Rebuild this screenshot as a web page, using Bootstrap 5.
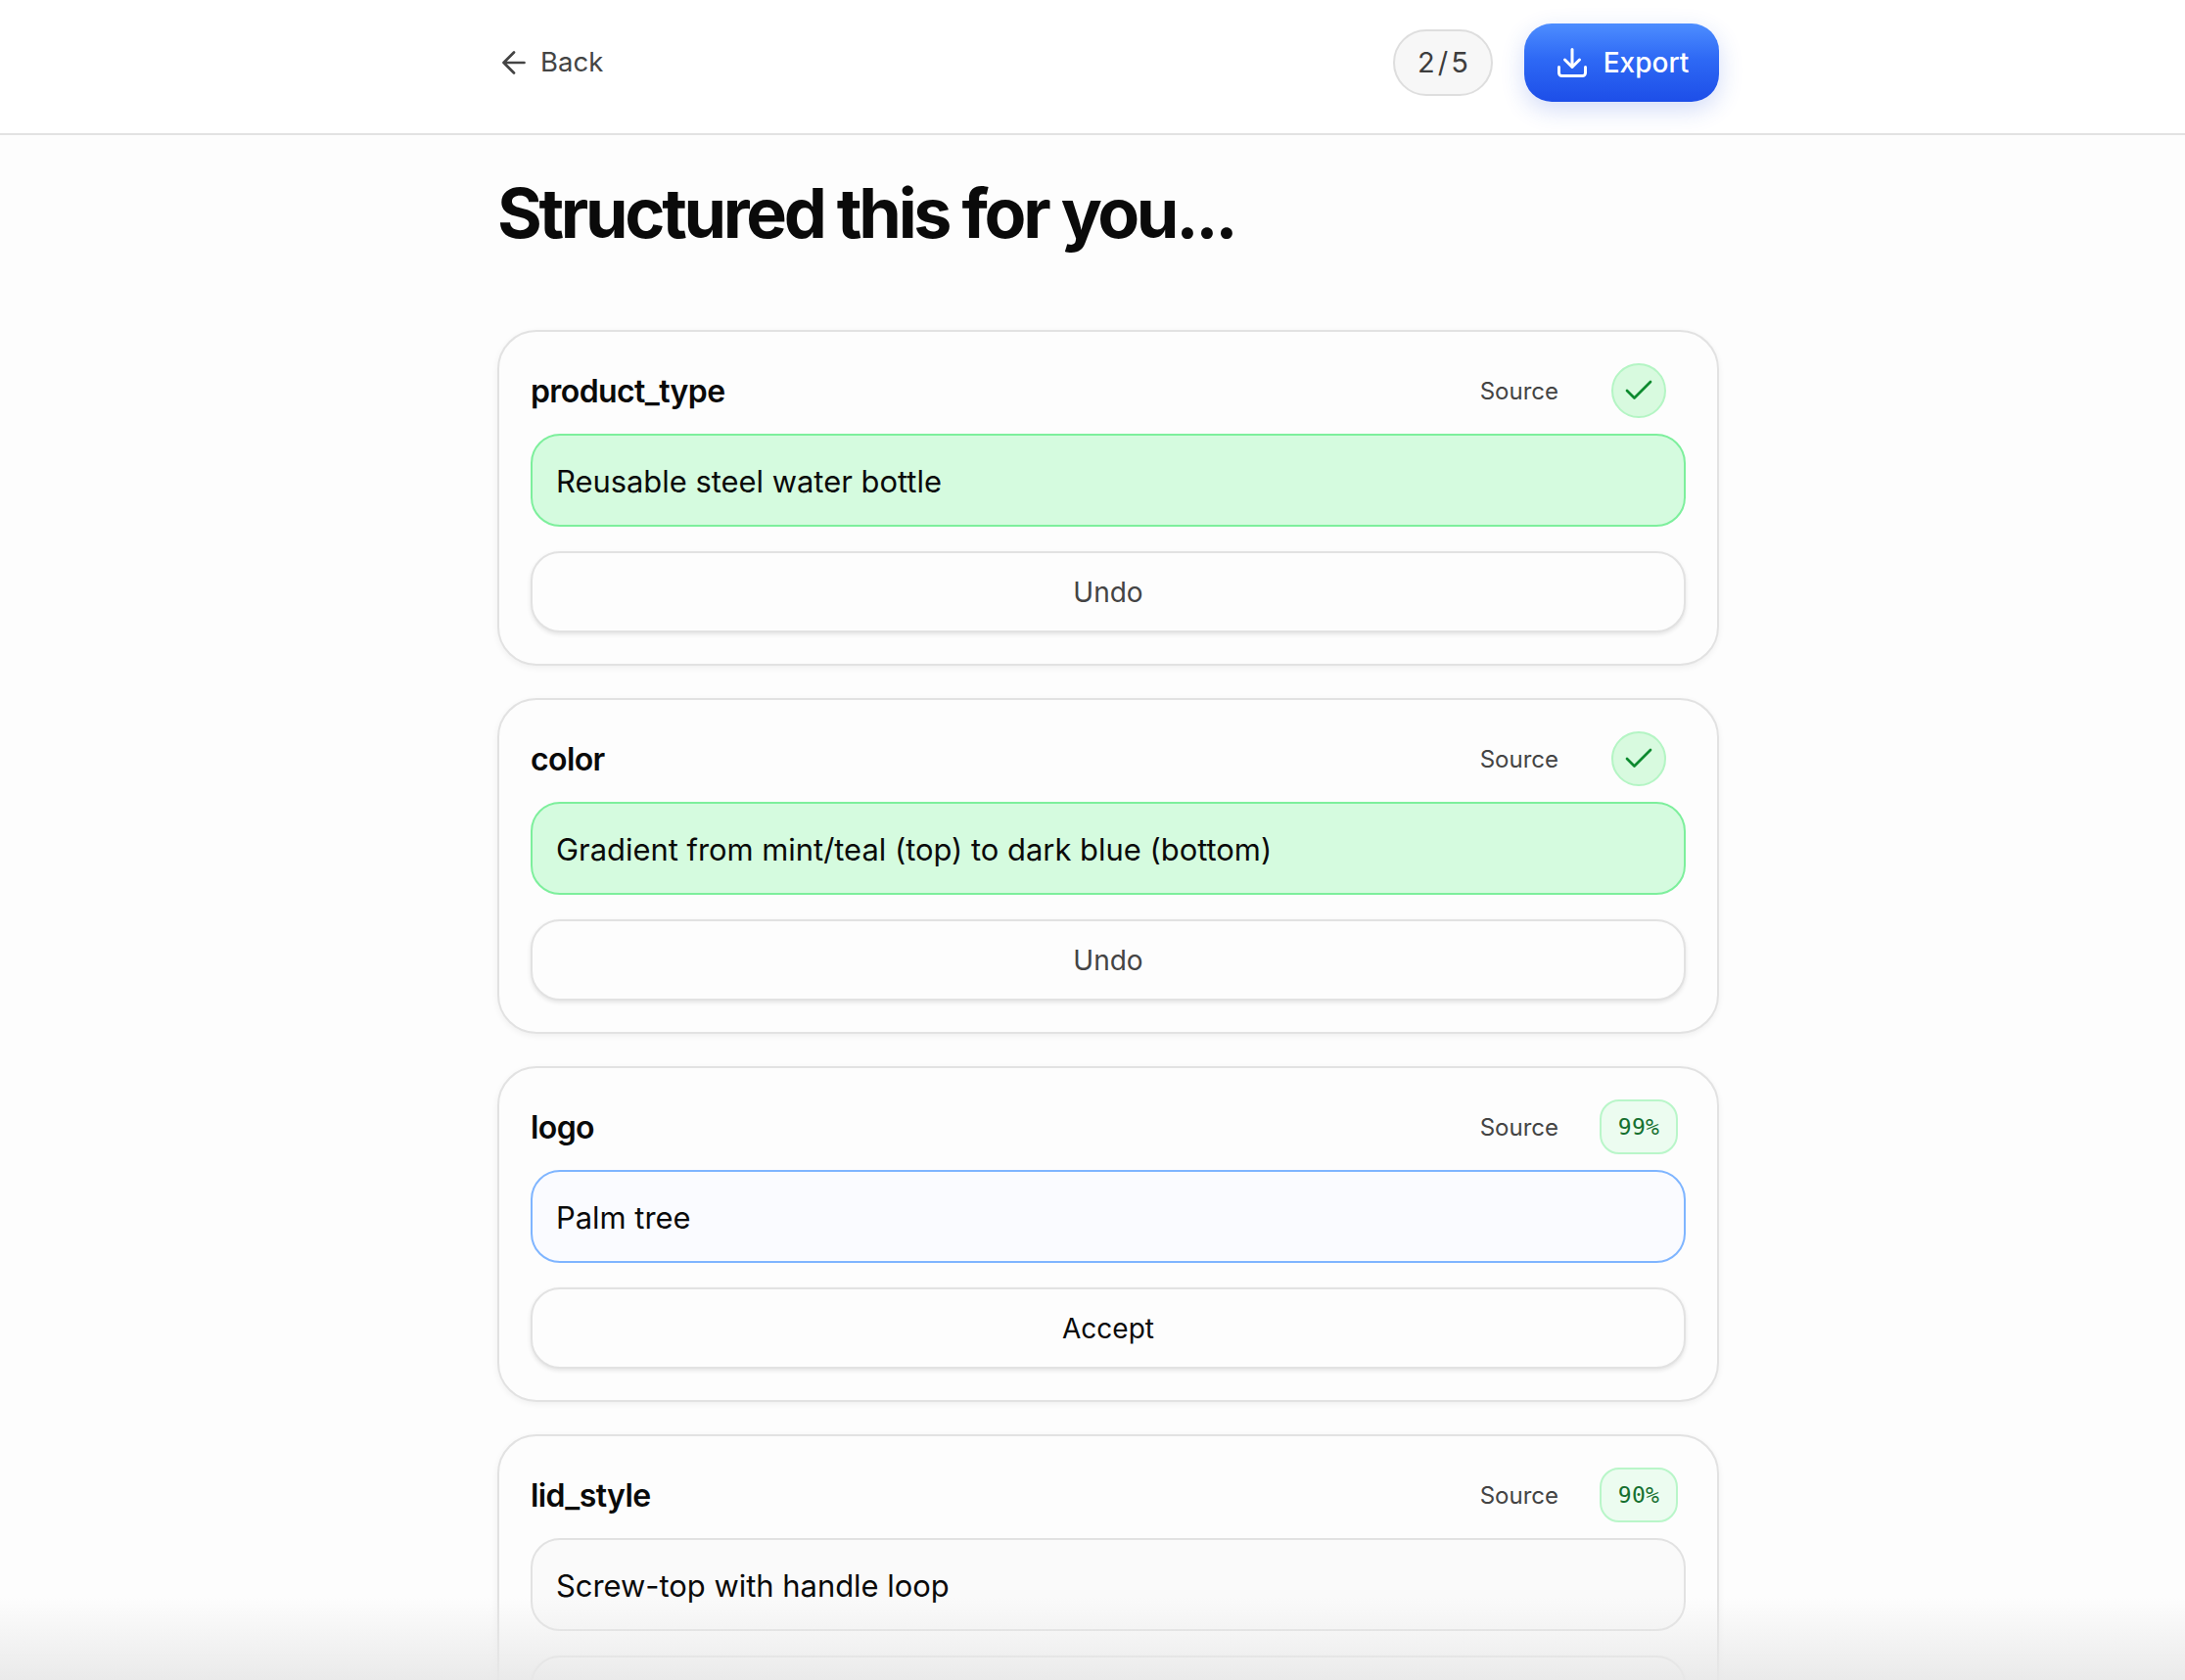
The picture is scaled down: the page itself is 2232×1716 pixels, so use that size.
<!DOCTYPE html>
<html lang="en">
<head>
    <meta charset="UTF-8">
    <meta name="viewport" content="width=device-width, initial-scale=1.0">
    <link href="https://cdn.jsdelivr.net/npm/bootstrap@5.3.7/dist/css/bootstrap.min.css" rel="stylesheet">
    <script src="https://cdn.jsdelivr.net/npm/bootstrap@5.3.7/dist/js/bootstrap.bundle.min.js"></script>
    <title>Structured this for you</title>
    <style>
        html, body { height: 1716px; overflow: hidden; }
        body { background: #fdfdfd; font-family: Inter, "Liberation Sans", sans-serif; color: #0a0a0a; }
        .shell { width: 1248px; margin-left: 508px; }
        .top-strip { height: 138px; background: #fff; border-bottom: 2px solid #e2e2e2; padding-bottom: 8px; }
        .back-link { color: #444; font-size: 27.5px; gap: 15px; padding-left: 5px; }
        .step-pill { height: 68px; width: 102px; border: 2px solid #dedede; background: #f7f7f7; border-radius: 34px; font-size: 29px; letter-spacing: 3px; padding-left: 3px; color: #3d3d3d; }
        .export-btn { height: 80px; width: 199px; border: 0; border-radius: 28px; gap: 14px; color: #fff; font-size: 28px; font-weight: 500;
            background: linear-gradient(180deg, #4d8dff 0%, #2e69f5 45%, #1d4ee8 100%);
            box-shadow: 0 8px 24px rgba(37, 80, 220, .2); }
        .export-btn:hover { color: #fff; }
        .page-title { font-size: 70px; font-weight: 700; letter-spacing: -3.3px; line-height: 82px; margin: 39px 0 78px; }
        .field-card { border: 2px solid #e2e2e2; border-radius: 40px; background: #fdfdfd; padding: 32px; height: 343px; margin-bottom: 33px;
            box-shadow: 0 2px 6px rgba(0, 0, 0, .06); }
        .field-head { height: 56px; margin-bottom: 16px; }
        .field-name { font-size: 32px; font-weight: 600; letter-spacing: -.6px; padding-top: 2px; }
        .source-link { font-size: 24px; color: #444; padding-top: 2px; }
        .status-slot { width: 80px; margin-left: 42px; margin-right: 8px; }
        .check-dot { width: 56px; height: 56px; border-radius: 50%; background: #d8fadf; border: 2px solid #b4f5c4; }
        .score-pill { width: 80px; height: 56px; border-radius: 20px; background: #ecfcf0; border: 2px solid #b9f6c9; color: #15702f; font-family: "DejaVu Sans Mono", "Liberation Mono", monospace; font-size: 23px; letter-spacing: .3px; }
        .value-box { height: 96px; border-radius: 30px; border: 2px solid #e2e2e2; background: #fafafa; padding: 3px 24px 0; font-size: 30.9px; margin-bottom: 25px; }
        .value-ok { background: #d5fbdf; border-color: #7def9c; }
        .value-active { background: #fafbff; border-color: #7fb5ff; }
        .row-btn { width: 100%; height: 84px; border-radius: 30px; border: 2px solid #e2e2e2; background: #fdfdfd; font-size: 28px; color: #444; padding-top: 8px;
            box-shadow: 0 2px 4px rgba(0, 0, 0, .1); }
        .row-btn-strong { color: #0a0a0a; }
        .bottom-fade { left: 0; right: 0; bottom: 0; height: 84px; pointer-events: none;
            background: linear-gradient(180deg, rgba(232, 232, 232, 0) 0%, rgba(232, 232, 232, .9) 100%); }
    </style>
</head>
<body class="position-relative">
    <header class="top-strip d-flex align-items-center">
        <div class="shell d-flex align-items-center justify-content-between">
            <a class="back-link d-flex align-items-center text-decoration-none" href="#">
                <svg width="24" height="24" viewBox="4 4 16 16" fill="none" stroke="#444" stroke-width="1.8" stroke-linecap="round" stroke-linejoin="round"><path d="M19 12H5M12 19l-7-7 7-7"/></svg>
                <span>Back</span>
            </a>
            <div class="d-flex align-items-center">
                <div class="step-pill d-flex align-items-center justify-content-center me-4">2/5</div>
                <button class="export-btn btn d-flex align-items-center justify-content-center ms-2" type="button">
                    <svg width="36" height="36" viewBox="0 0 24 24" fill="none" stroke="#fff" stroke-width="2" stroke-linecap="round" stroke-linejoin="round"><path d="M12 3v12M7 10l5 5 5-5M21 15v4a2 2 0 0 1-2 2H5a2 2 0 0 1-2-2v-4"/></svg>
                    <span>Export</span>
                </button>
            </div>
        </div>
    </header>

    <main class="shell">
        <h1 class="page-title">Structured this for you...</h1>

        <section class="field-card card">
            <div class="field-head d-flex align-items-center justify-content-between">
                <span class="field-name">product_type</span>
                <div class="d-flex align-items-center">
                    <span class="source-link">Source</span>
                    <div class="status-slot d-flex justify-content-center">
                        <div class="check-dot d-flex align-items-center justify-content-center">
                            <svg width="36" height="36" viewBox="0 0 24 24" fill="none" stroke="#0d8a2f" stroke-width="1.8" stroke-linecap="round" stroke-linejoin="round"><path d="M20 6 9 17l-5-5"/></svg>
                        </div>
                    </div>
                </div>
            </div>
            <div class="value-box value-ok d-flex align-items-center">Reusable steel water bottle</div>
            <button class="row-btn btn" type="button">Undo</button>
        </section>

        <section class="field-card card">
            <div class="field-head d-flex align-items-center justify-content-between">
                <span class="field-name">color</span>
                <div class="d-flex align-items-center">
                    <span class="source-link">Source</span>
                    <div class="status-slot d-flex justify-content-center">
                        <div class="check-dot d-flex align-items-center justify-content-center">
                            <svg width="36" height="36" viewBox="0 0 24 24" fill="none" stroke="#0d8a2f" stroke-width="1.8" stroke-linecap="round" stroke-linejoin="round"><path d="M20 6 9 17l-5-5"/></svg>
                        </div>
                    </div>
                </div>
            </div>
            <div class="value-box value-ok d-flex align-items-center">Gradient from mint/teal (top) to dark blue (bottom)</div>
            <button class="row-btn btn" type="button">Undo</button>
        </section>

        <section class="field-card card">
            <div class="field-head d-flex align-items-center justify-content-between">
                <span class="field-name">logo</span>
                <div class="d-flex align-items-center">
                    <span class="source-link">Source</span>
                    <div class="status-slot d-flex justify-content-center">
                        <div class="score-pill d-flex align-items-center justify-content-center">99%</div>
                    </div>
                </div>
            </div>
            <div class="value-box value-active d-flex align-items-center">Palm tree</div>
            <button class="row-btn row-btn-strong btn" type="button">Accept</button>
        </section>

        <section class="field-card card">
            <div class="field-head d-flex align-items-center justify-content-between">
                <span class="field-name">lid_style</span>
                <div class="d-flex align-items-center">
                    <span class="source-link">Source</span>
                    <div class="status-slot d-flex justify-content-center">
                        <div class="score-pill d-flex align-items-center justify-content-center">90%</div>
                    </div>
                </div>
            </div>
            <div class="value-box d-flex align-items-center">Screw-top with handle loop</div>
            <button class="row-btn btn" type="button"></button>
        </section>
    </main>

    <div class="bottom-fade position-absolute"></div>
</body>
</html>
